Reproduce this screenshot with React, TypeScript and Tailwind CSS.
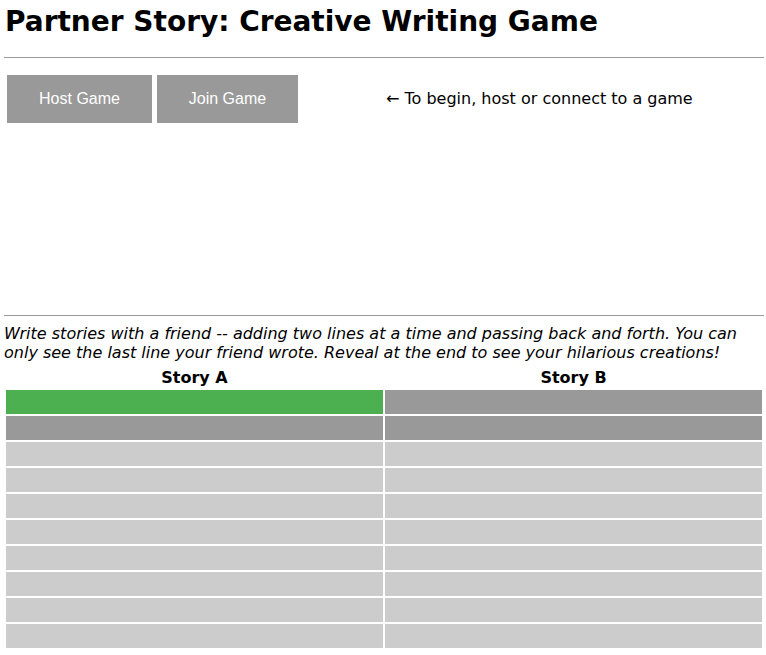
const rows = [0, 1, 2, 3, 4, 5, 6, 7, 8, 9]

const cellColor = (row: number, col: number) => {
  if (row === 0 && col === 0) return "bg-[#4caf50]"
  if (row <= 1) return "bg-[#999999]"
  return "bg-[#cccccc]"
}

const App = () => {
  return (
    <div className="px-[4px] text-black" style={{ fontFamily: '"DejaVu Sans", sans-serif' }}>
      <h1 className="pl-[1px] pt-[4px] text-[28px] font-bold leading-[36px]">Partner Story: Creative Writing Game</h1>
      <div className="mt-[17px] h-px w-[760px] bg-[#9a9a9a]" />
      <div className="mt-[17px] flex items-center pl-[3px]">
        <button className="h-[48px] w-[145px] bg-[#999999] text-[16px] text-white" style={{ fontFamily: '"Liberation Sans", Arial, sans-serif' }}>
          Host Game
        </button>
        <button className="ml-[5px] h-[48px] w-[141px] bg-[#999999] text-[16px] text-white" style={{ fontFamily: '"Liberation Sans", Arial, sans-serif' }}>
          Join Game
        </button>
        <span className="ml-[88px] text-[16px]">← To begin, host or connect to a game</span>
      </div>
      <div className="mt-[192px] h-px w-[760px] bg-[#9a9a9a]" />
      <p className="mt-[8px] text-[16px] italic leading-[19px]">
        Write stories with a friend -- adding two lines at a time and passing back and forth. You can only see the last line your friend wrote. Reveal at the end to see your hilarious creations!
      </p>
      <div className="mt-[7px] grid grid-cols-2 gap-[2px] pl-[2px] w-[758px]">
        <div className="mb-[1px] text-center text-[16px] font-bold leading-[18px]">Story A</div>
        <div className="mb-[1px] text-center text-[16px] font-bold leading-[18px]">Story B</div>
        {rows.flatMap((r) => [
          <div key={`a${r}`} className={`h-[24px] ${cellColor(r, 0)}`} />,
          <div key={`b${r}`} className={`h-[24px] ${cellColor(r, 1)}`} />,
        ])}
      </div>
    </div>
  )
}

export default App
